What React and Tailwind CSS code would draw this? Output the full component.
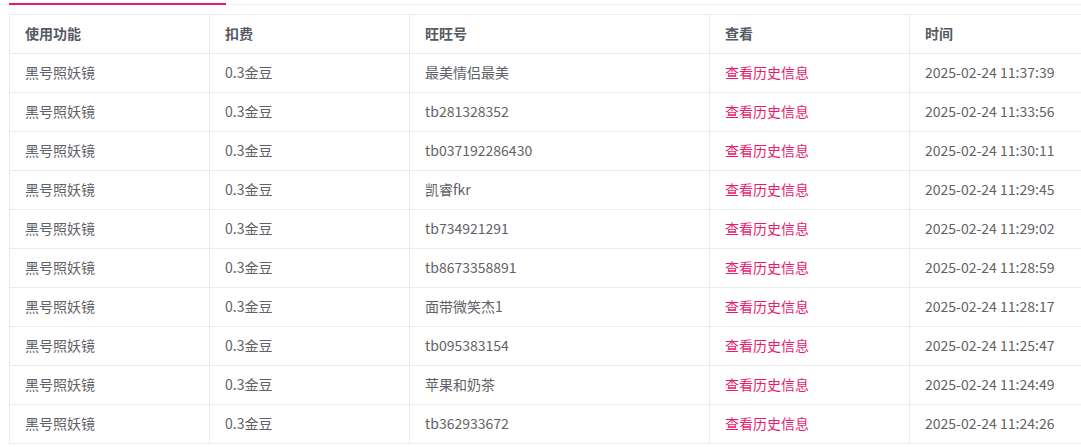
import React from 'react';

const rows = [
  ['最美情侣最美', '2025-02-24 11:37:39'],
  ['tb281328352', '2025-02-24 11:33:56'],
  ['tb037192286430', '2025-02-24 11:30:11'],
  ['凯睿fkr', '2025-02-24 11:29:45'],
  ['tb734921291', '2025-02-24 11:29:02'],
  ['tb8673358891', '2025-02-24 11:28:59'],
  ['面带微笑杰1', '2025-02-24 11:28:17'],
  ['tb095383154', '2025-02-24 11:25:47'],
  ['苹果和奶茶', '2025-02-24 11:24:49'],
  ['tb362933672', '2025-02-24 11:24:26'],
];

const font = { fontFamily: '"Microsoft YaHei", "Noto Sans CJK SC", sans-serif' };

const App = () => {
  return (
    <div
      className="w-[1081px] h-[447px] overflow-hidden bg-white text-[14px]"
      style={font}
    >
      {/* tab bar */}
      <div className="h-[5px] pt-[3px] border-b border-[#eeeeee]">
        <div className="ml-[9px] w-[217px] h-[2px] bg-[#e8176b]" />
      </div>

      <table className="mt-[9px] ml-[9px] border-collapse table-fixed w-[1100px]">
        <colgroup>
          <col className="w-[200px]" />
          <col className="w-[200px]" />
          <col className="w-[300px]" />
          <col className="w-[200px]" />
          <col className="w-[200px]" />
        </colgroup>
        <thead>
          <tr className="h-[39px] text-[#555a63] font-semibold">
            <th className="border border-[#ebebeb] pl-[15px] pb-[1px] text-left font-semibold">使用功能</th>
            <th className="border border-[#ebebeb] pl-[15px] pb-[1px] text-left font-semibold">扣费</th>
            <th className="border border-[#ebebeb] pl-[15px] pb-[1px] text-left font-semibold">旺旺号</th>
            <th className="border border-[#ebebeb] pl-[15px] pb-[1px] text-left font-semibold">查看</th>
            <th className="border border-[#ebebeb] pl-[15px] pb-[1px] text-left font-semibold">时间</th>
          </tr>
        </thead>
        <tbody>
          {rows.map(([ww, time], i) => (
            <tr key={i} className="h-[39px] text-[#5f6368]">
              <td className="border border-[#ebebeb] pl-[15px] pb-[1px]">黑号照妖镜</td>
              <td className="border border-[#ebebeb] pl-[15px] pb-[1px]">0.3金豆</td>
              <td className="border border-[#ebebeb] pl-[15px] pb-[1px]">{ww}</td>
              <td className="border border-[#ebebeb] pl-[15px] pb-[1px] text-[#ea1a6e] cursor-pointer">查看历史信息</td>
              <td className="border border-[#ebebeb] pl-[15px] pb-[1px]">{time}</td>
            </tr>
          ))}
        </tbody>
      </table>
    </div>
  );
};

export default App;
